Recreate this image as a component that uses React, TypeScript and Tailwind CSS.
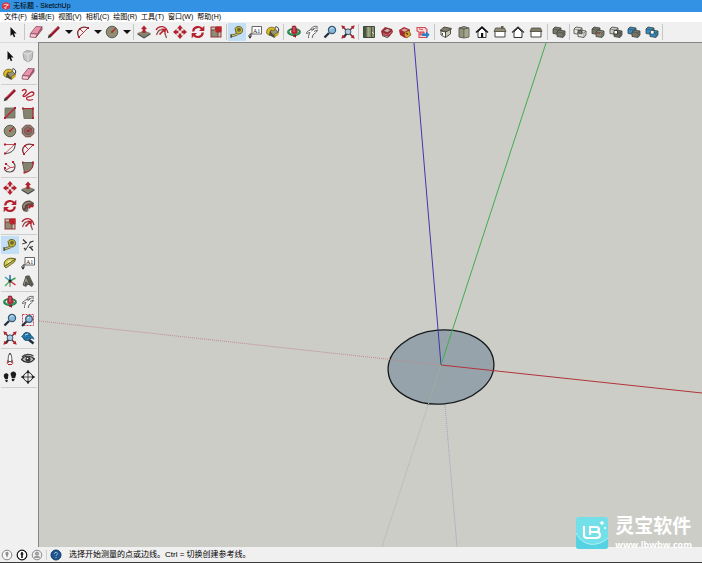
import React, { useState } from 'react';
import clsx from 'clsx';

const RED = '#b3202e';
const DARK = '#33332e';
const CLAY = '#85826f';

// Icons are drawn on a 14 x 14 grid
const icons: Record<string, React.ReactNode> = {
  select: <path d="M4.5 2v9l2-1.800 1.400 3 1.400-.7-1.400-2.900h2.700z" fill="#111" />,
  component: <g fill="#c4c4c2" stroke="#8f8f8d" strokeWidth=".8"><path d="M2 4l4-2.500 6 1-1 8-4 2.500-4-2.500z" /><path d="M2 4l5 1.500 5-3M7 5.500V13" fill="none" stroke="#ececea" /></g>,
  eraser: <g stroke="#8d4a5c" strokeWidth=".8"><path d="M1.500 8.500L7 1.500l6 .3-4.500 7.400z" fill="#e794ab" /><path d="M1.500 8.500l7 .7-1.700 3.300L1 12z" fill="#f6c6d2" /><path d="M8.500 9.200L13 1.800v3l-6.200 7.700z" fill="#c05f7a" /></g>,
  pencil: <g><path d="M3 11L12 2" stroke="#8f1724" strokeWidth="2.600" /><path d="M4 9L11 2.200" stroke="#cc4450" strokeWidth=".8" /><path d="M.8 13.200l1-3.700 2.700 2.500z" fill={DARK} /></g>,
  freehand: <path d="M1 3C3 .5 6 1.500 5 4S1 7.500 2.500 8.500C5 9.500 8 3.500 11 4s2 3-.5 4-5 .5-5 2.500 3.500 2 6.500 1" fill="none" stroke={RED} strokeWidth="1.300" />,
  rect: <g><path d="M2 2h10v10H2z" fill={CLAY} stroke="#66655a" strokeWidth=".8" /><path d="M2.500 11.500l9-9" stroke={RED} strokeWidth="1.100" /><path d="M1 11h2v2H1zM11 1h2v2h-2z" fill={RED} /></g>,
  rotRect: <g><path d="M2 2.500h10v10H3z" fill={CLAY} stroke="#66655a" strokeWidth=".8" /><path d="M2.500 2.500H12V12" fill="none" stroke={RED} /><path d="M1 1.500h2v2H1zM11 1.500h2v2h-2zM11 11h2v2h-2z" fill={RED} /></g>,
  circle: <g><circle cx="7" cy="7" r="5.800" fill="#8f8d72" stroke="#55544a" strokeWidth=".9" /><path d="M7 7l3.500-3.500" stroke={RED} strokeWidth="1.200" /><circle cx="7" cy="7" r="1" fill={RED} /></g>,
  polygon: <g><path d="M4.500 1.200h5l3.300 3.300v5l-3.300 3.300h-5L1.200 9.500v-5z" fill="#8b8173" stroke="#7a3a38" strokeWidth=".9" /><circle cx="7" cy="7" r="3.600" fill="#8b6b62" stroke="#6b4a44" strokeWidth=".7" /><path d="M7 7l3.500-2.500" stroke={RED} /><circle cx="7" cy="7" r="1.300" fill={RED} /></g>,
  arc: <g fill="none" stroke={RED}><path d="M2 2.500h9.500" stroke={RED} strokeWidth=".8" /><path d="M12 2c.5 6-4 9.500-10 9.500" stroke="#444" /><path d="M2 11.500L12 2" strokeWidth=".7" /><path d="M1 10.500h2v2H1zM11 1h2v2h-2zM1 1.500h2v2H1z" fill={RED} stroke="none" /></g>,
  arc2: <g fill="none" stroke={RED}><path d="M3 12C-1 6 5 0 12 3" stroke="#7a3238" strokeWidth="1.300" /><path d="M3 12L12 3M4 4l3.500 3.500" strokeWidth=".9" /><path d="M2 11h2v2H2zM11 2h2v2h-2zM3 3h2v2H3z" fill={RED} stroke="none" /></g>,
  arc3: <g fill="none"><path d="M10 2c4 4 1.500 10-3.500 10S1 9 2 7" stroke="#5b4443" strokeWidth="1.100" /><path d="M3 4l4.500 3.500L12 7M7.500 7.500L3 10" stroke={RED} strokeWidth=".8" /><path d="M2 3h2v2H2zM9 1h2v2H9zM1 7h2v2H1z" fill={RED} /></g>,
  pie: <g><path d="M1.500 2.500H12C12.500 8 9 12 3.500 12.500z" fill={CLAY} stroke="#66655a" /><path d="M12 2.500C12.500 8 9 12 3.500 12.500" fill="none" stroke={RED} /><path d="M11 1.500h2v2h-2zM2.500 11.500h2v2h-2zM1 1.500h1.500v2H1z" fill={RED} /></g>,
  move: <g fill={RED}><path d="M7 0l3 3.500H8.200v2H5.800v-2H4zM7 14l3-3.500H8.200v-2H5.800v2H4zM0 7l3.500-3v1.800h2v2.400h-2V10zM14 7l-3.500-3v1.800h-2v2.400h2V10z" /></g>,
  pushPull: <g><path d="M.5 8L7 5.500 13.500 8 7 12z" fill={CLAY} /><path d="M.5 8v1.500L7 13.500l6.500-4V8L7 12z" fill="#44443b" /><path d="M7 .5l3 3.500H8.500v4h-3V4H4z" fill={RED} /></g>,
  rotate: <g fill="none" stroke={RED} strokeWidth="2.200"><path d="M2.200 6.500C2.500 1.500 9 .8 11 4" /><path d="M11.800 7.500C11.500 12.500 5 13.200 3 10" /><path d="M13.300.8V6H8zM.7 13.200V8H6z" fill={RED} stroke="none" /></g>,
  followMe: <g><path d="M2.500 12C-1.500 7 3 .5 9 1.500l4 2.500-1 3.500c-4-2-6-.5-4.500 2L5.500 13z" fill="#5d4c44" /><path d="M3 9c-1-4 3-6 7-5" fill="none" stroke="#a98e82" strokeWidth="1.200" /><path d="M7 8.500C7.500 5 10 5 13 6l-1 2.500C10 8 9 8.500 9 10z" fill={RED} /><circle cx="6" cy="11" r="1.600" fill="#77756a" /></g>,
  scale: <g><path d="M1.500 1.500h11v11h-11z" fill="#8c3a35" /><path d="M2.500 5.500H8.500v6h-6z" fill="#8f8b79" /><path d="M9.500 7.500h2v4h-2z" fill="#cbc7b8" /><path d="M2.500 2.500h3.500v2H2.500z" fill="#cfc3b6" /><path d="M7 1.500h5.500V7L10.800 5.300 8 8 6.300 6.200 8.800 3.400z" fill="#c91f2b" /></g>,
  offset: <g fill="none" stroke={RED}><path d="M1 5C4 0 11 0 13 8" strokeWidth="1.300" /><path d="M1.500 10C3 5.500 5 4.500 7 5" stroke="#88463f" strokeWidth="1.100" /><path d="M9.500 8c1 1 1.500 3 2 5" stroke="#88463f" strokeWidth="1.100" /><path d="M4.500 9.500l4-4" strokeWidth="1.700" /><path d="M6 3.500l5 .2-.5 5z" fill={RED} stroke="none" /></g>,
  tape: <g><path d="M5 3.500C7 .5 12 .8 12.500 4.500S10 9.500 6.500 9z" fill="#c6b632" stroke="#57521f" strokeWidth=".9" /><circle cx="9" cy="4.800" r="2" fill="#6c6838" /><path d="M6.500 8.500L1.500 10v2l6-2" fill="#d8cf7a" stroke="#57521f" strokeWidth=".8" /><path d="M1 9v4" stroke={DARK} /></g>,
  dimension: <g stroke={DARK} fill="none"><path d="M2 1.500l3.500 3.500M9 9l3 3.500" strokeWidth="1.200" /><path d="M1 6l5-1.500M4 12.500L10 3.500" strokeWidth=".9" /><path d="M8.500 4.500L12.500 3M3 10l2 2M8 9.500l4-1" strokeWidth="1.200" /></g>,
  protractor: <g><path d="M1.500 10.500C-.5 4 6 .5 12.500 3z" fill="#d5cb52" stroke="#5e5920" /><path d="M12.500 3l-1 3-8.500 6-1.500-1.500z" fill="#c2b94a" stroke="#5e5920" strokeWidth=".8" /><path d="M4.500 7.500C4 5.500 6 4.300 9 4.500z" fill="#f3f2dc" /></g>,
  text: <g><path d="M4 1.500h9.500v7.500H4z" fill="#fff" stroke="#555" strokeWidth=".9" /><path d="M4 9H2v3M.5 10.500L2 13.200l1.500-2.700" fill="none" stroke="#222" /><text x="5" y="7.500" fontSize="6" fontFamily="Liberation Serif, serif" fill="#222">A1</text></g>,
  axes: <g fill="none" strokeWidth="1.500"><path d="M7 7V1" stroke="#3561c5" /><path d="M7 7l5.500-3" stroke="#38a058" /><path d="M7 7l5.500 4" stroke="#cf2c3c" /><path d="M7 7L2 3" stroke="#31a49e" /><path d="M7 7l-5 5" stroke="#43b253" /><path d="M7 7v6" stroke="#555" strokeWidth=".9" /><circle cx="7" cy="7" r="1.500" fill="#222" stroke="none" /></g>,
  text3d: <g><path d="M2 11L5.500 1.500H8.500l4.300 9-2 2.500-3-2H6.500L5 13z" fill="#5c5b54" /><path d="M2 11L5 2l3.500 8.500-2-.5-1-2-1 .5L4 12z" fill="#97958a" stroke="#3e3d38" strokeWidth=".7" /></g>,
  paint: <g><path d="M3 6l5.500-3 4.500 4.500L8.500 13 3 10z" fill="#4c4b3f" /><path d="M4.500 6.500L9 4l2.500 3L7.500 10z" fill="#9a967d" /><path d="M.8 8.500C-.5 3 5.500.5 9.500 3.500L7.500 6C5 4 3.500 5.500 3.500 10.500z" fill="#dcbb20" stroke="#5c4e15" strokeWidth=".7" /><path d="M9 2.500c2-2 4.500 1 3.500 4" fill="none" stroke="#222" /><path d="M8.500 9.500L12.500 7v3l-4 2.500z" fill="#c8a91b" /></g>,
  orbit: <g fill="none"><ellipse cx="7" cy="7" rx="6" ry="3" stroke="#257d44" strokeWidth="1.800" /><path d="M5.500 1h3l2 6-2 4.500h-2l-2-4.500z" fill="#b7293a" stroke="#7a1726" strokeWidth=".6" /><path d="M1.500 5.500C2 10.500 10 11 12.500 7" stroke="#32975a" strokeWidth="1.500" /><path d="M6 10l3-.5V13z" fill="#8d1828" /><path d="M7 2v5" stroke="#e8828a" strokeWidth=".8" /></g>,
  pan: <g fill="#fff" stroke="#555" strokeWidth=".9"><path d="M3.500 13C3 11 4.500 9 5 7.500L1.500 8.500C1 7 3 6 4.500 5.500L6 3.500C8 1.500 10 1 12.500 1.500M5.500 5L9 3.500M6.500 6l4-3L13 3M9 6.500L12.500 5C11.500 8 9 8.500 8 10l-.8 3" /></g>,
  zoom: <g><path d="M1.500 12.500l4.500-4.500" stroke="#242f3e" strokeWidth="2.300" /><circle cx="9" cy="5" r="3.600" fill="#86b8dc" stroke="#3c5973" strokeWidth="1.200" /><path d="M7 4.500c.5-1.500 2-2 3-1.500" fill="none" stroke="#e5f3fb" /></g>,
  zoomWindow: <g><path d="M1.500 1.500h11v11h-11z" fill="none" stroke="#c64952" strokeDasharray="2 1" /><path d="M1 13l4.500-4.500" stroke="#242f3e" strokeWidth="2.200" /><circle cx="8" cy="6" r="3.400" fill="#86b8dc" stroke="#3c5973" strokeWidth="1.200" /><path d="M6.500 5.500L8 4" stroke="#e5f3fb" /></g>,
  extents: <g><path d="M2 2l3 3M12 2L9 5M2 12l3-3M12 12L9 9" stroke="#7e2930" strokeWidth="1.500" /><circle cx="7" cy="6.800" r="2.900" fill="#a9cbe0" stroke="#445767" /><path d="M5.500 9L3 12.500" stroke="#26303b" strokeWidth="1.600" /><path d="M.3.300l4 1.200-2.800 2.800zM13.700.3l-4 1.200 2.800 2.800zM.3 13.700l4-1.200-2.800-2.800zM13.700 13.700l-4-1.200 2.800-2.800z" fill={RED} /></g>,
  previous: <g><path d="M7 8l5.500 4.500" stroke="#1f2d3d" strokeWidth="2.500" /><circle cx="6" cy="5.500" r="4" fill="#3f8fc4" stroke="#23506f" /><path d="M.5 5.500L5 1.500v2.300c4.500-.3 7 1 8 4.400-2.500-1.200-4.500-1.200-8-1v2.300z" fill="#2277ab" stroke="#1b4b6c" strokeWidth=".6" /><path d="M4 4l3-1" stroke="#b9e1f3" /></g>,
  camera: <g><path d="M5.200 9.500C5 5 5.500 3 7 1c1.500 2 2 4 1.800 8.500z" fill="#fff" stroke="#444" strokeWidth=".9" /><path d="M5 8l-1 3.500 2-1.500M9 8l1 3.500L8 10" fill="none" stroke="#a03840" strokeWidth=".9" /><path d="M7 1v2" stroke="#444" /><path d="M5 12.500h4" stroke={RED} /></g>,
  look: <g><path d="M.5 7.500C3 3.500 10 3 13.500 7 10 11.500 4 11.500.5 7.500z" fill="#bbb" stroke="#2c2c29" strokeWidth="1.200" /><circle cx="7" cy="7.300" r="2.500" fill="#333" /><path d="M1 5c3-3 8-3.500 11.500-1" fill="none" stroke="#444" strokeWidth="1.500" /><circle cx="6.500" cy="6.500" r=".8" fill="#fff" /></g>,
  walk: <g fill="#1c1c1b"><path d="M.8 6.500C.3 3 4.500 2 5.500 4.800L4.800 9H2zM2.200 9.800h2.500c.3 3.200-2.300 3.200-2.500 0zM7.500 4C8 .5 13 .5 13.200 4.500L12 8.200 8.800 8zM8.800 8.800l2.800.3c-.3 3.300-3.300 2.800-2.800-.3z" /></g>,
  section: <g fill="none" stroke="#222"><circle cx="7" cy="7" r="4.500" /><path d="M7 .3v13.400M.3 7h13.400" strokeWidth=".8" /><path d="M7 0l2 2.800H5zM7 14l2-2.800H5zM0 7l2.800-2v4zM14 7l-2.800-2v4z" fill="#222" stroke="none" /></g>,
  map: <g><path d="M1.500 1.500h11v11h-11z" fill="#8a9470" stroke="#40463a" /><path d="M2 2h2.500v10H2zM9 2h1v10H9z" fill="#495443" /><path d="M6 2c2 4-1 6 1 10" fill="none" stroke="#a9ac86" strokeWidth="1.300" /><path d="M10 7l2 2" stroke="#e2dfc2" /></g>,
  getModels: <g><path d="M1 6l4-4 7 2 1 3-4 5-7-2z" fill="#9c2d34" /><path d="M3 6l4-2.500L11 5 7.500 7.500z" fill="#d9b0ae" stroke="#632126" strokeWidth=".6" /><path d="M3 8.500l4.500 1.500 4-3" fill="none" stroke="#c9777d" /><path d="M2 10.500l5 2 2-1" fill="none" stroke="#4b4b43" /></g>,
  shareModel: <g><path d="M1 5l5-3 6 2.500-1 6-4 2.500-5-3z" fill="#a82a32" /><path d="M3 5l3.500-1.500L10 5 7 7z" fill="#d9a5a2" /><path d="M7 7l4-1.500 2 4.500-4.500 3L6 10z" fill="#dda32c" stroke="#664716" strokeWidth=".7" /><path d="M8 8l2 1.500" stroke="#473417" strokeWidth="1.500" /></g>,
  layout: <g><path d="M1 2.500h8l2 2v8H3V7L1 6z" fill="#f7dada" stroke="#d24a54" strokeWidth="1.100" /><path d="M3 4l4 .5M4 7h4v3H4z" fill="#eb868d" stroke="#d24a54" /><path d="M6 8.500h4V6.300L13.700 9.800 10 13.200V11H6z" fill="#2680cb" /></g>,
  iso: <g stroke="#3f3f38" strokeWidth=".9"><path d="M1 5.500L5 2l7.500 1.500L10 7z" fill="#817f6c" /><path d="M2 6v4l4.500 2.500V7z" fill="#fff" /><path d="M6.500 7l5-2.500V9l-5 3.500z" fill="#c8c5b4" /><path d="M3.500 8v2" /></g>,
  top: <g stroke="#55564b" strokeWidth=".9"><path d="M2 3l5-1.500L12 3v9l-5 1-5-1z" fill="#94947c" /><path d="M2 3l5 1 5-1M7 4v9" fill="none" /><path d="M7.500 4.500L11.500 3.500v8l-4 1z" fill="#a6a68f" stroke="none" /></g>,
  front: <g><path d="M3 7v5.500h8V7L7 3z" fill="#fff" stroke="#222" strokeWidth=".9" /><path d="M1 7.500L7 2l6 5.500" fill="none" stroke="#111" strokeWidth="1.500" /><path d="M6 8h2.200v4.500H6z" fill="#111" /></g>,
  right: <g><path d="M2 6h10v6H2z" fill="#fff" stroke="#44443e" /><path d="M2.500 3h9L13 6.500H1z" fill="#918d77" stroke="#4c4b41" strokeWidth=".8" /><path d="M8 1h2.500v3H8z" fill="#605f55" /></g>,
  back: <g fill="#fff" stroke="#333" strokeWidth="1"><path d="M3 7v5.500h8V7L7 3z" /><path d="M1 7.500L7 2l6 5.500" fill="none" strokeWidth="1.200" /></g>,
  left: <g><path d="M2 6h10v6H2z" fill="#fff" stroke="#44443e" /><path d="M2.500 3h9L13 6.500H1z" fill="#807d69" stroke="#4c4b41" strokeWidth=".8" /></g>,
  outer: <Solids a="#77776a" b="#77776a" />,
  intersect: <g><Solids a="#e4e4df" b="#e4e4df" /><path d="M5 5l4 1v3L5 8z" fill="#77776a" stroke="#333" strokeWidth=".7" /></g>,
  union: <g><Solids a="#77776a" b="#8b887a" /><path d="M6 7h3v2H6z" fill="#8b5048" /></g>,
  subtract: <g><Solids a="#cfcfca" b="#6c6b60" /><path d="M5 5.500h3.500V9H5z" fill="#fff" stroke="#222" strokeWidth=".8" /></g>,
  trim: <Solids a="#2f8ac5" b="#76756a" />,
  split: <g><Solids a="#2f8ac5" b="#2f8ac5" /><path d="M5.500 5.500H9V9H5.500z" fill="#fff" stroke="#2b4354" strokeWidth=".7" /></g>,
};

function Solids({ a, b }: { a: string; b: string }) {
  return (
    <g stroke="#3f403a" strokeWidth=".8">
      <path d="M1 4l2-2 6 1v5L7 9.500 1 8.500z" fill={a} />
      <path d="M1 4l6 1 2-2M7 5v4" fill="none" strokeWidth=".5" />
      <path d="M5 7l2-2 6 1v4l-2 2.500-6-1z" fill={b} />
      <path d="M5 7l6 1 2-2M11 8v4" fill="none" strokeWidth=".5" />
    </g>
  );
}

const menus = ['文件(F)', '编辑(E)', '视图(V)', '相机(C)', '绘图(R)', '工具(T)', '窗口(W)', '帮助(H)'];

// '|' is a divider inside a toolbar, '||' the gap between two toolbars, 'v' a drop-down arrow
const topTools = [
  'select', '||', 'eraser', 'pencil', 'v', 'arc2', 'v', 'circle', 'v', '|',
  'pushPull', 'offset', 'move', 'rotate', 'scale', '|',
  'tape', 'text', 'paint', '|',
  'orbit', 'pan', 'zoom', 'extents', '|',
  'map', 'getModels', 'shareModel', 'layout', '||',
  'iso', 'top', 'front', 'right', 'back', 'left', '||',
  'outer', '|', 'intersect', 'union', 'subtract', 'trim', 'split', '|',
];

const sideTools = [
  ['select', 'component', 'paint', 'eraser'],
  ['pencil', 'freehand', 'rect', 'rotRect', 'circle', 'polygon', 'arc', 'arc2', 'arc3', 'pie'],
  ['move', 'pushPull', 'rotate', 'followMe', 'scale', 'offset'],
  ['tape', 'dimension', 'protractor', 'text', 'axes', 'text3d'],
  ['orbit', 'pan', 'zoom', 'zoomWindow', 'extents', 'previous'],
  ['camera', 'look', 'walk', 'section'],
];

interface ToolProps {
  name: string;
  active: boolean;
  onSelect: (name: string) => void;
}

const Tool: React.FC<ToolProps> = ({ name, active, onSelect }) => (
  <button
    type="button"
    aria-label={name}
    aria-pressed={active}
    onClick={() => onSelect(name)}
    className={clsx('flex size-[18px] shrink-0 items-center justify-center', active ? 'bg-[#c3dff5]' : 'hover:bg-[#dcebf7]')}
  >
    <svg viewBox="0 0 14 14" className="size-3.5">{icons[name]}</svg>
  </button>
);

const Viewport: React.FC = () => (
  <main className="min-w-0 flex-1 border-t border-l border-[#858585] bg-[#cdcdc8]">
    <svg viewBox="0 0 663 504" preserveAspectRatio="xMidYMid slice" className="size-full">
      <ellipse cx="402" cy="324" rx="53" ry="37" transform="rotate(-5 402 324)" fill="#96a3aa" stroke="#15191b" strokeWidth="1.300" />
      <g strokeWidth="1">
        <path d="M0 278L402 322" stroke="#c08a88" strokeDasharray="1 1" />
        <path d="M402 322L343 504" stroke="#a3b8a0" strokeDasharray="1 1" />
        <path d="M406 362L418 504" stroke="#a0a0c4" strokeDasharray="1 1" />
        <path d="M375 0L402 322" stroke="#4038a8" />
        <path d="M507 0L402 322" stroke="#3fae4c" />
        <path d="M402 322L663 350" stroke="#b0343a" />
      </g>
    </svg>
  </main>
);

const Watermark: React.FC = () => (
  <div className="pointer-events-none absolute right-2.5 bottom-3 flex items-center gap-[7px] font-bold text-white">
    <svg viewBox="0 0 32 32" className="size-8">
      <rect width="32" height="32" rx="3" fill="#72dfe9" />
      <path d="M0 16c6 13 21 15 32 5v8a3 3 0 0 1-3 3H3a3 3 0 0 1-3-3z" fill="#55d3e3" />
      <path d="M0 16c6 13 21 15 32 5" fill="none" stroke="#b4f1f6" strokeWidth="1" />
      <path d="M8 9v9q0 3 3 3h9q4 0 4-3t-4-3h-6m6 0q3 0 3-2.500T20 10h-6v8" fill="none" stroke="#fff" strokeWidth="2.200" />
      <circle cx="26" cy="6" r="1.800" fill="#fff" />
      <circle cx="29" cy="11" r="1" fill="#fff" />
    </svg>
    <div>
      <p className="text-[19px] leading-6">灵宝软件</p>
      <p className="font-['Open_Sans',sans-serif] text-[9px] leading-3">www.lbwbw.com</p>
    </div>
  </div>
);

const App: React.FC = () => {
  const [tool, setTool] = useState('tape');

  return (
    <div className="relative flex h-screen flex-col overflow-hidden bg-[#f0f0f0] font-['Liberation_Sans','Noto_Sans_CJK_SC',sans-serif] text-black">
      <header className="flex h-3 shrink-0 items-center gap-[3px] bg-[#3392e3] pl-0.5">
        <svg viewBox="0 0 8 8" className="size-2">
          <path d="M0 2l4-2 4 2v4L4 8 0 6z" fill="#d8323b" />
          <path d="M1.500 3L4 2l2.500 1L4 4v2.500L2 5.500" fill="none" stroke="#fbe1e1" strokeWidth=".9" />
        </svg>
        <h1 className="text-[7px] leading-3">无标题 - SketchUp</h1>
      </header>

      <nav className="flex h-2.5 shrink-0 items-center gap-1 bg-white pl-1 text-[7px] leading-[10px]">
        {menus.map((m) => <button key={m} type="button" className="whitespace-nowrap">{m}</button>)}
      </nav>

      <div role="toolbar" aria-label="Main" className="flex h-5 shrink-0 items-center pl-1">
        {topTools.map((t, i) => {
          if (t === '|') return <span key={i} className="mx-px h-4 w-px shrink-0 bg-[#c6c6c6]" />;
          if (t === '||') return <span key={i} className="mx-0.5 h-4 w-px shrink-0 bg-[#c6c6c6]" />;
          if (t === 'v') {
            return (
              <button key={i} type="button" aria-label="More" className="flex h-4 w-[11px] shrink-0 items-center justify-center">
                <svg viewBox="0 0 8 4" className="h-1 w-2"><path d="M0 0h8L4 4z" fill="#111" /></svg>
              </button>
            );
          }
          return <Tool key={i} name={t} active={tool === t} onSelect={setTool} />;
        })}
      </div>

      <div className="flex min-h-0 flex-1">
        <aside role="toolbar" aria-label="Large tool set" className="w-[38px] shrink-0 border-t border-[#dcdcdc] pt-1 pl-px">
          {sideTools.map((group) => (
            <div key={group[0]}>
              <div className="grid w-9 grid-cols-2">
                {group.map((t) => <Tool key={t} name={t} active={tool === t} onSelect={setTool} />)}
              </div>
              <div className="my-px h-px w-9 bg-[#cfcfcf]" />
            </div>
          ))}
        </aside>
        <Viewport />
      </div>

      <footer className="flex h-4 shrink-0 items-center border-b border-[#3a3a3a] pl-px text-[8px] leading-[15px]">
        <div className="flex items-center gap-[3px]">
          <svg viewBox="0 0 12 12" className="size-3"><circle cx="6" cy="6" r="4.800" fill="#fafafa" stroke="#858585" /><path d="M6 9L4.500 5a1.600 1.600 0 1 1 3 0z" fill="#909090" /></svg>
          <svg viewBox="0 0 12 12" className="size-3"><circle cx="6" cy="6" r="4.800" fill="#fff" stroke="#111" strokeWidth="1.200" /><path d="M6 3v6" stroke="#111" strokeWidth="1.600" /><path d="M4.500 5h3" stroke="#111" /></svg>
          <svg viewBox="0 0 12 12" className="size-3"><circle cx="6" cy="6" r="4.800" fill="#eee" stroke="#8c8c8c" /><circle cx="6" cy="4.600" r="1.600" fill="#aaa" stroke="#777" strokeWidth=".6" /><path d="M3 9c0-3 6-3 6 0z" fill="#999" /></svg>
          <span className="h-2.5 w-px bg-[#cfcfcf]" />
          <svg viewBox="0 0 12 12" className="size-3"><circle cx="6" cy="6" r="5" fill="#1f568f" stroke="#173b62" /><path d="M4.500 4.800c0-2 3.200-1.800 3 0-.1 1-1.500 1-1.500 2.200M6 8v1" fill="none" stroke="#9fc4e6" strokeWidth="1" /></svg>
        </div>
        <p className="ml-[7px] whitespace-nowrap">选择开始测量的点或边线。Ctrl = 切换创建参考线。</p>
      </footer>

      <Watermark />
    </div>
  );
};

export default App;
